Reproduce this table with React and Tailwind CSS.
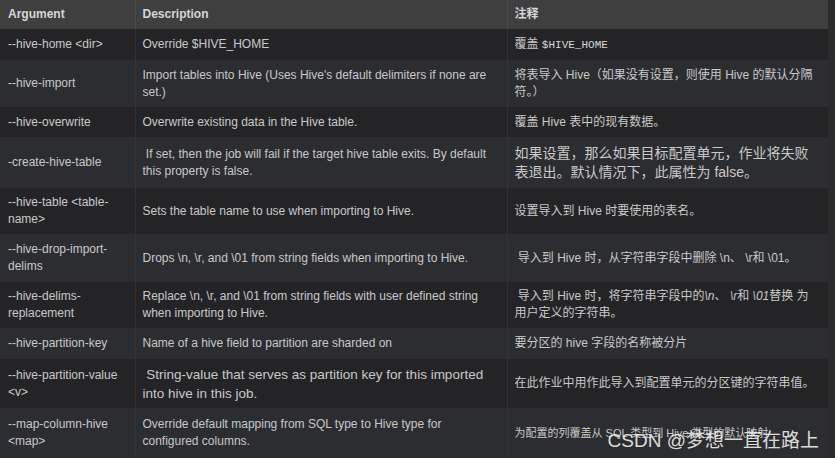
import React from 'react';

const rows = [
  {
    h: 'h-[31px]',
    arg: '--hive-home <dir>',
    desc: 'Override $HIVE_HOME',
    note: (
      <>
        覆盖 <span className="font-['Liberation_Mono',monospace] text-[11px] text-[#d8d8d8]">$HIVE_HOME</span>
      </>
    ),
  },
  {
    h: 'h-[47px]',
    arg: '--hive-import',
    desc: "Import tables into Hive (Uses Hive's default delimiters if none are set.)",
    note: '将表导入 Hive（如果没有设置，则使用 Hive 的默认分隔符。）',
  },
  {
    h: 'h-[30px]',
    arg: '--hive-overwrite',
    desc: 'Overwrite existing data in the Hive table.',
    note: '覆盖 Hive 表中的现有数据。',
  },
  {
    h: 'h-[51px]',
    arg: '-create-hive-table',
    desc: '\u00a0If set, then the job will fail if the target hive table exits. By default this property is false.',
    note: <span className="text-[14px] leading-[19px]">如果设置，那么如果目标配置单元，作业将失败表退出。默认情况下，此属性为 false。</span>,
  },
  {
    h: 'h-[46px]',
    arg: '--hive-table <table-name>',
    desc: 'Sets the table name to use when importing to Hive.',
    note: '设置导入到 Hive 时要使用的表名。',
  },
  {
    h: 'h-[48px]',
    arg: '--hive-drop-import-delims',
    desc: 'Drops \\n, \\r, and \\01 from string fields when importing to Hive.',
    note: '\u00a0导入到 Hive 时，从字符串字段中删除 \\n、 \\r和 \\01。',
  },
  {
    h: 'h-[46px]',
    arg: '--hive-delims-replacement',
    desc: 'Replace \\n, \\r, and \\01 from string fields with user defined string when importing to Hive.',
    note: (
      <>
        {'\u00a0导入到 Hive 时，将字符串字段中的'}
        <i>\n</i>、 <i>\r</i>和 <i>\01</i>替换 为
        <br />
        用户定义的字符串。
      </>
    ),
  },
  {
    h: 'h-[31px]',
    arg: '--hive-partition-key',
    desc: 'Name of a hive field to partition are sharded on',
    note: '要分区的 hive 字段的名称被分片',
  },
  {
    h: 'h-[49px]',
    arg: '--hive-partition-value <v>',
    desc: <span className="text-[13.5px] leading-[19px]">{'\u00a0String-value that serves as partition key for this imported into hive in this job.'}</span>,
    note: '在此作业中用作此导入到配置单元的分区键的字符串值。',
  },
  {
    h: 'h-[50px]',
    arg: '--map-column-hive <map>',
    desc: 'Override default mapping from SQL type to Hive type for configured columns.',
    note: <span className="text-[11px]">为配置的列覆盖从 SQL 类型到 Hive 类型的默认映射</span>,
  },
];

export default function App() {
  return (
    <div className="relative h-[458px] w-[835px] overflow-hidden bg-[#2b2b2b] font-['Liberation_Sans','Noto_Sans_CJK_SC',sans-serif] text-[12px] leading-[17px] text-[#c9c9c9]">
      <table className="w-[828px] table-fixed border-collapse">
        <colgroup>
          <col className="w-[135px]" />
          <col className="w-[372px]" />
          <col className="w-[321px]" />
        </colgroup>
        <thead>
          <tr className="h-[29px] bg-[#3f3f3f] text-left font-bold text-[#d6d6d6]">
            <th className="border-r border-[#4a4a4a] px-2 align-middle">Argument</th>
            <th className="border-r border-[#4a4a4a] px-[7px] align-middle">Description</th>
            <th className="px-[7px] align-middle">注释</th>
          </tr>
        </thead>
        <tbody>
          {rows.map((r, i) => (
            <tr key={i} className={`${r.h} ${i % 2 === 0 ? 'bg-[#242427]' : 'bg-[#2c2d30]'}`}>
              <td className="border-r border-[#333336] px-2 align-middle">{r.arg}</td>
              <td className="border-r border-[#333336] px-[7px] align-middle">{r.desc}</td>
              <td className="px-[7px] align-middle">{r.note}</td>
            </tr>
          ))}
        </tbody>
      </table>
      <div className="absolute bottom-[8px] right-[16px] text-[19px] leading-none text-[#f2f2f2]/90">
        CSDN @梦想一直在路上
      </div>
    </div>
  );
}
